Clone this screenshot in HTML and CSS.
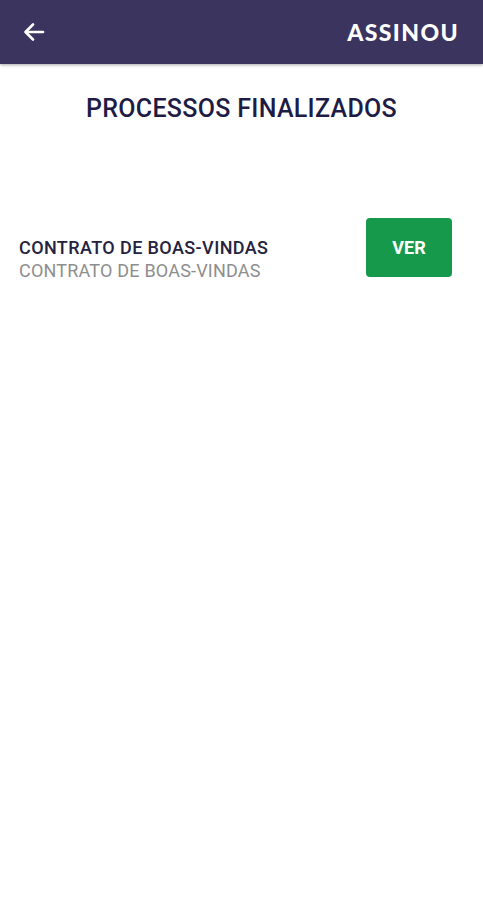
FILE: index.html
```html
<!DOCTYPE html>
<html lang="pt">
<head>
  <meta charset="UTF-8" />
  <title>Assinou</title>
  <link rel="stylesheet" href="styles.css">
</head>
<body>
  <header class="topbar">
    <button class="back" aria-label="Voltar">
      <svg width="22" height="20" viewBox="0 0 22 20" fill="none" stroke="#fff" stroke-width="2.6" stroke-linecap="round" stroke-linejoin="round">
        <path d="M20 10H3" />
        <path d="M10 2.5L2.5 10L10 17.5" />
      </svg>
    </button>
    <span class="brand">ASSINOU</span>
  </header>

  <h2 class="title">PROCESSOS FINALIZADOS</h2>

  <div class="item">
    <div class="item-text">
      <div class="item-name">CONTRATO DE BOAS-VINDAS</div>
      <div class="item-sub">CONTRATO DE BOAS-VINDAS</div>
    </div>
    <button class="ver">VER</button>
  </div>
</body>
</html>
```

FILE: styles.css
```css
body {
  margin: 0;
  font-family: Roboto, "Noto Sans", sans-serif;
  background: #fff;
}

.topbar {
  height: 64px;
  background: #3a345f;
  display: flex;
  align-items: center;
  justify-content: space-between;
  padding: 0 24px 0 23px;
  box-shadow: 0 1px 3px rgba(0, 0, 0, 0.35);
}

.back {
  background: none;
  border: none;
  padding: 0;
  display: flex;
  cursor: pointer;
}

.brand {
  color: #fff;
  font-family: Lato, "Open Sans", sans-serif;
  font-weight: 900;
  font-size: 23px;
  letter-spacing: 1.4px;
}

.title {
  margin: 30px 0 0;
  text-align: center;
  font-size: 25px;
  font-weight: 500;
  color: #1e1c45;
  letter-spacing: 0.3px;
}

.item {
  display: flex;
  align-items: center;
  justify-content: space-between;
  margin-top: 114px;
  padding: 0 31px 0 19px;
}

.item-name {
  font-size: 18px;
  font-weight: 500;
  color: #24223f;
  letter-spacing: 0.4px;
}

.item-sub {
  font-size: 18px;
  color: #8e8e8e;
  margin-top: 2px;
  letter-spacing: 0.2px;
}

.ver {
  width: 86px;
  height: 59px;
  background: #17994b;
  color: #fff;
  border: none;
  border-radius: 4px;
  font-family: Roboto, sans-serif;
  font-weight: 700;
  font-size: 18px;
  margin-top: -24px;
}
```
